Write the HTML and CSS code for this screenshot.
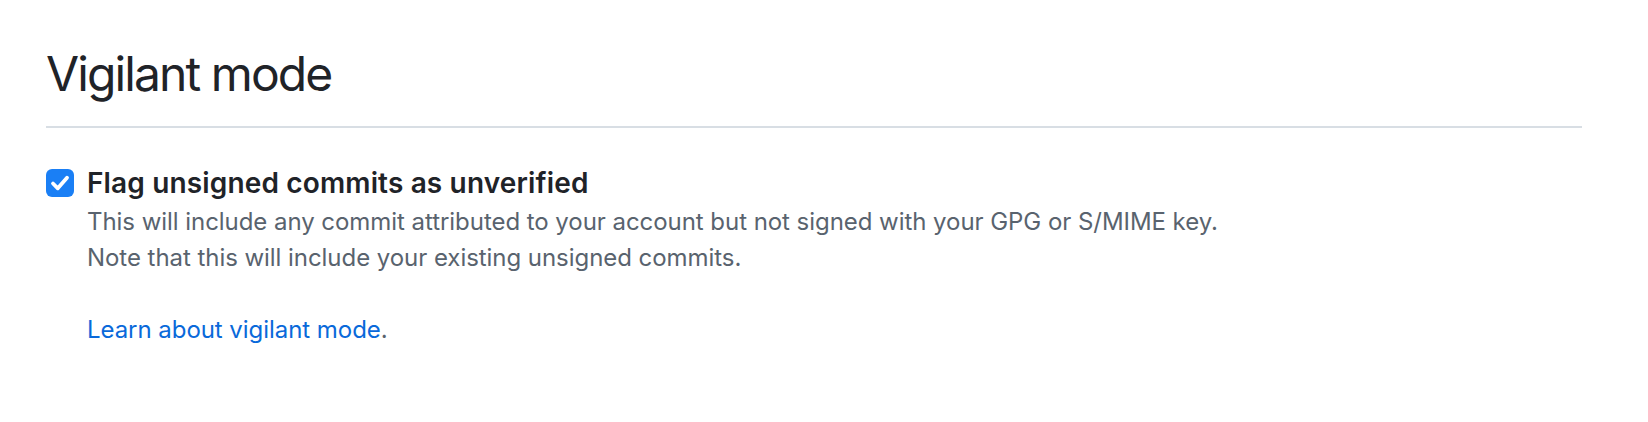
FILE: index.html
```html
<!DOCTYPE html>
<html>
<head>
<meta charset="utf-8">
<link rel="stylesheet" href="styles.css">
</head>
<body>
<div class="page">
  <h2 class="subhead">Vigilant mode</h2>
  <div class="form-check">
    <span class="checkbox">
      <svg viewBox="0 0 28 28" width="28" height="28"><path d="M7 14.5 L11.8 19.3 L21 8.8" fill="none" stroke="#fff" stroke-width="3.8" stroke-linecap="round" stroke-linejoin="round"/></svg>
    </span>
    <div class="check-body">
      <div class="check-label">Flag unsigned commits as unverified</div>
      <p class="note">This will include any commit attributed to your account but not signed with your GPG or S/MIME key.<br>Note that this will include your existing unsigned commits.</p>
      <p class="note"><a class="link" href="#">Learn about vigilant mode</a>.</p>
    </div>
  </div>
</div>
</body>
</html>
```
FILE: styles.css
```css
html, body {
  margin: 0;
  padding: 0;
  background: #ffffff;
}
body {
  font-family: Inter, "Noto Sans", "Liberation Sans", sans-serif;
  color: #1f2328;
}
.page {
  padding: 44px 66px 0 46px;
}
.subhead {
  margin: 0;
  font-size: 48px;
  font-weight: 400;
  line-height: 60px;
  letter-spacing: -1.9px;
  padding-bottom: 22px;
  border-bottom: 2px solid #d8dee4;
  color: #1f2328;
}
.form-check {
  display: flex;
  align-items: flex-start;
  margin-top: 34px;
}
.checkbox {
  flex: none;
  width: 28px;
  height: 28px;
  margin-top: 7px;
  margin-right: 13px;
  border-radius: 6px;
  background: #1a7ff5;
  display: flex;
}
.check-label {
  font-size: 28px;
  font-weight: 600;
  line-height: 42px;
  letter-spacing: 0.15px;
  color: #1f2328;
}
.note {
  margin: 0;
  font-size: 24px;
  line-height: 36px;
  letter-spacing: -0.05px;
  color: #59636e;
}
.note + .note {
  margin-top: 36px;
}
.link {
  color: #0969da;
  text-decoration: none;
}
```
